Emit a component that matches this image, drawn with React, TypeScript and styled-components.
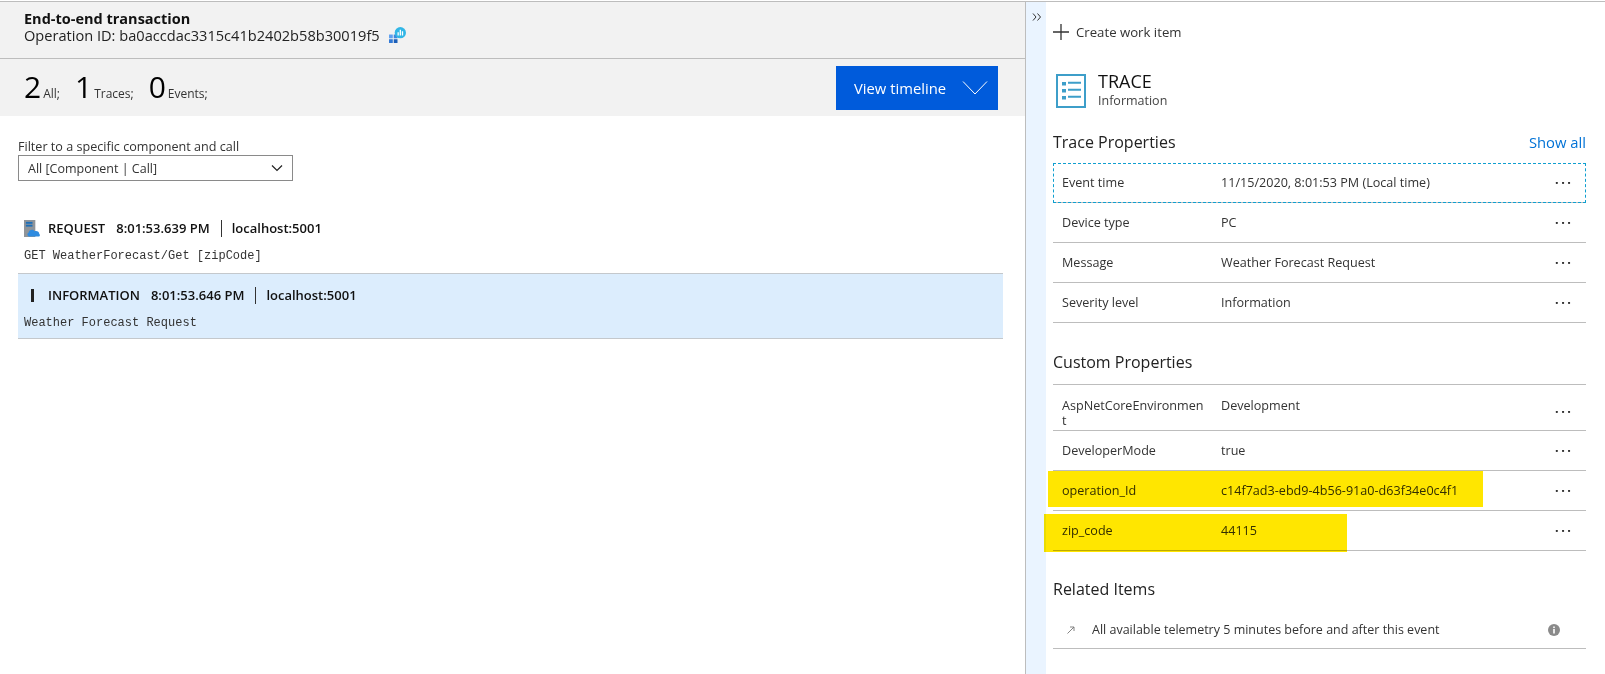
import React from "react";
import styled, { createGlobalStyle } from "styled-components";

const Global = createGlobalStyle`
  html, body { margin: 0; padding: 0; background: #fff; }
  body { font-family: "Open Sans", "Noto Sans", "Liberation Sans", sans-serif; color: #1b1b1b; }
  * { box-sizing: border-box; }
`;

const Page = styled.div`
  display: flex;
  width: 1605px;
  height: 674px;
  padding-top: 1px;
  overflow: hidden;
`;
const Frame = styled.div`
  display: flex;
  flex: 1;
  border-top: 1px solid #bdbdbd;
`;
const LeftPane = styled.section`
  width: 1025px;
  flex: none;
  display: flex;
  flex-direction: column;
`;
const TitleBar = styled.header`
  height: 57px;
  padding: 9px 0 0 24px;
  background: #f2f2f2;
  border-bottom: 1px solid #bdbdbd;
`;
const Title = styled.div`
  font-size: 14.5px;
  line-height: 15px;
  font-weight: 700;
  color: #111;
`;
const OperationLine = styled.div`
  display: flex;
  align-items: center;
  gap: 9px;
  font-size: 14.6px;
  line-height: 18px;
  color: #222;
`;
const StatsBar = styled.div`
  height: 57px;
  padding: 7px 27px 0 24px;
  background: #f2f2f2;
  display: flex;
  justify-content: space-between;
  align-items: flex-start;
`;
const Stats = styled.div`
  display: flex;
  align-items: baseline;
  gap: 15px;
  padding-top: 5px;
`;
const Stat = styled.div`
  display: flex;
  align-items: baseline;
  gap: 2px;
  font-size: 12px;
  color: #333;
`;
const StatNumber = styled.span`
  font-size: 30px;
  line-height: 32px;
  color: #000;
`;
const TimelineButton = styled.button`
  width: 162px;
  height: 44px;
  border: 0;
  padding: 0 10px 0 18px;
  background: #005bdb;
  color: #fff;
  display: flex;
  align-items: center;
  justify-content: space-between;
  font: 14.8px "Open Sans", sans-serif;
`;
const FilterArea = styled.div`
  padding: 22px 0 0 18px;
`;
const FilterLabel = styled.div`
  font-size: 12.6px;
  line-height: 17px;
  color: #333;
`;
const Select = styled.div`
  width: 275px;
  height: 26px;
  border: 1px solid #8a8a8a;
  padding: 0 9px;
  display: flex;
  align-items: center;
  justify-content: space-between;
  font-size: 12.5px;
  color: #333;
`;
const Entries = styled.div`
  margin: 35px 22px 0 18px;
`;
const Entry = styled.div<{ $selected?: boolean }>`
  height: ${(p) => (p.$selected ? "66px" : "57px")};
  padding: ${(p) => (p.$selected ? "11px" : "2px")} 0 0 6px;
  background: ${(p) => (p.$selected ? "#dcedfd" : "transparent")};
  border-top: ${(p) => (p.$selected ? "1px solid #c4c8cc" : "0")};
  border-bottom: ${(p) => (p.$selected ? "1px solid #c4c8cc" : "0")};
`;
const EntryHead = styled.div`
  display: flex;
  align-items: center;
  height: 20px;
  font-size: 13px;
  font-weight: 600;
  color: #111;
`;
const EntryIcon = styled.span`
  width: 24px;
  flex: none;
  display: flex;
`;
const EntryTime = styled.span`
  margin-left: 11px;
  padding-right: 11px;
  border-right: 1px solid #333;
  line-height: 17px;
`;
const EntryHost = styled.span`
  margin-left: 10px;
`;
const Mono = styled.div`
  margin-top: 10px;
  font-family: "Liberation Mono", "DejaVu Sans Mono", monospace;
  font-size: 12px;
  line-height: 16px;
  color: #333;
`;
const InfoGlyph = styled.span`
  width: 3px;
  height: 13px;
  margin-left: 7px;
  background: #222;
`;
const Strip = styled.aside`
  width: 21px;
  flex: none;
  display: flex;
  align-items: flex-start;
  border-left: 1px solid #bdbdbd;
  background: #eaf4ff;
  padding: 11px 0 0 6px;
`;
const RightPane = styled.section`
  flex: 1;
  padding: 0 19px 0 7px;
`;
const CreateItem = styled.div`
  display: flex;
  align-items: center;
  gap: 7px;
  height: 18px;
  margin-top: 21px;
  font-size: 13.2px;
  color: #333;
`;
const Kind = styled.div`
  display: flex;
  align-items: center;
  gap: 12px;
  margin: 30px 0 0 3px;
`;
const KindName = styled.div`
  font-size: 18px;
  line-height: 20px;
  color: #111;
`;
const KindSub = styled.div`
  font-size: 12.5px;
  line-height: 20px;
  color: #444;
`;
const SectionHead = styled.div<{ $top: number }>`
  display: flex;
  justify-content: space-between;
  align-items: center;
  height: 22px;
  margin-top: ${(p) => p.$top}px;
  font-size: 16px;
  color: #222;
`;
const ShowAll = styled.a`
  font-size: 14.8px;
  color: #0072d6;
`;
const Rows = styled.div<{ $ruled?: boolean; $gap: number }>`
  margin-top: ${(p) => p.$gap}px;
  border-top: ${(p) => (p.$ruled ? "1px solid #bdbdbd" : "0")};
`;
const Row = styled.div<{ $focus?: boolean; $tall?: boolean }>`
  position: relative;
  display: grid;
  grid-template-columns: 159px 1fr 44px;
  align-items: ${(p) => (p.$tall ? "start" : "center")};
  height: ${(p) => (p.$tall ? "46px" : "40px")};
  padding: ${(p) => (p.$tall ? "13px" : "0")} 0 0 9px;
  font-size: 12.6px;
  line-height: 15px;
  color: #333;
  border-bottom: 1px solid #bdbdbd;
  outline: ${(p) => (p.$focus ? "1px dashed #0f9fd0" : "0")};
  outline-offset: -1px;
`;
const Label = styled.div`
  word-break: break-all;
  padding-right: 16px;
`;
const Dots = styled.div<{ $tall?: boolean }>`
  font-size: 15px;
  font-weight: 600;
  letter-spacing: 2px;
  color: #333;
  text-align: center;
  line-height: 15px;
  margin-top: ${(p) => (p.$tall ? "6px" : "0")};
`;
const Marker = styled.span<{ $left: number; $w: number; $top: number; $h: number }>`
  position: absolute;
  left: ${(p) => p.$left}px;
  top: ${(p) => p.$top}px;
  width: ${(p) => p.$w}px;
  height: ${(p) => p.$h}px;
  background: #ffe600;
  mix-blend-mode: multiply;
`;
const Related = styled.div`
  display: flex;
  align-items: center;
  height: 38px;
  margin-top: 11px;
  padding-left: 14px;
  font-size: 12.5px;
  color: #333;
  border-bottom: 1px solid #bdbdbd;
`;
const RelatedText = styled.span`
  margin-left: 17px;
  flex: 1;
`;
const InfoBadge = styled.span`
  width: 12px;
  height: 12px;
  margin-right: 26px;
  display: flex;
`;

const InsightsIcon = () => (
  <svg width="17" height="16" viewBox="0 0 18 17">
    <rect x="0" y="8" width="4" height="4" fill="#5ea0ef" />
    <rect x="5" y="8" width="4" height="4" fill="#3f85dc" />
    <rect x="0" y="13" width="4" height="4" fill="#2f78d6" />
    <rect x="5" y="13" width="4" height="4" fill="#1c5fb8" />
    <circle cx="12" cy="6" r="6" fill="#31b6e6" />
    <path d="M9 5.5h1.4V9H9zM11.3 3h1.4v6h-1.4zM13.6 4.5H15V9h-1.4z" fill="#fff" />
  </svg>
);

const TraceIcon = () => (
  <svg width="30" height="34" viewBox="0 0 30 34">
    <rect x="1" y="1" width="28" height="32" fill="#fff" stroke="#3d9ec9" strokeWidth="2" />
    <rect x="6" y="8" width="4" height="3.5" fill="#3d9ec9" />
    <rect x="6" y="15" width="4" height="3.5" fill="#3d9ec9" />
    <rect x="6" y="22" width="4" height="3.5" fill="#3d9ec9" />
    <path d="M12 8.8h13M12 15.8h13M12 22.8h13" stroke="#3d9ec9" strokeWidth="2" />
  </svg>
);

const RequestIcon = () => (
  <svg width="17" height="17" viewBox="0 0 18 18">
    <rect x="0" y="0" width="12" height="18" fill="#8f9499" />
    <rect x="2" y="2" width="7" height="2" fill="#1e6fb8" />
    <rect x="2" y="5" width="7" height="2" fill="#1e6fb8" />
    <path d="M6 17.5c-2.4 0-3.3-3.3-1-4.3.2-2.7 4.5-4.2 6.2-1.2 2.4-1 5 .6 5 2.9.9.4 1.1 2.6-.6 2.6z" fill="#2e8be0" />
  </svg>
);

const Chevron = () => (
  <svg width="12" height="8" viewBox="0 0 12 8" fill="none" stroke="#222" strokeWidth="1.2">
    <path d="M1 1.5 6 6.5 11 1.5" />
  </svg>
);
const BigChevron = () => (
  <svg width="26" height="16" viewBox="0 0 26 16" fill="none" stroke="#fff" strokeWidth="1">
    <path d="M1 1.5 13 14 25 1.5" />
  </svg>
);
const DoubleChevron = () => (
  <svg width="10" height="8" viewBox="0 0 10 8" fill="none" stroke="#333" strokeWidth="1">
    <path d="M1 .5 4 4 1 7.5M5.5 .5 8.5 4 5.5 7.5" />
  </svg>
);
const Plus = () => (
  <svg width="16" height="16" viewBox="0 0 16 16" stroke="#333" strokeWidth="1.3">
    <path d="M8 0v16M0 8h16" />
  </svg>
);
const OutArrow = () => (
  <svg width="8" height="8" viewBox="0 0 8 8" fill="none" stroke="#777" strokeWidth="0.9">
    <path d="M.5 7.5 7 1M3 1h4v4" />
  </svg>
);
const Info = () => (
  <svg width="12" height="12" viewBox="0 0 12 12">
    <circle cx="6" cy="6" r="6" fill="#8a8a8a" />
    <rect x="5.2" y="5" width="1.6" height="4.5" fill="#fff" />
    <rect x="5.2" y="2.5" width="1.6" height="1.6" fill="#fff" />
  </svg>
);

type Prop = { k: string; v: string };
const traceProps: Prop[] = [
  { k: "Event time", v: "11/15/2020, 8:01:53 PM (Local time)" },
  { k: "Device type", v: "PC" },
  { k: "Message", v: "Weather Forecast Request" },
  { k: "Severity level", v: "Information" },
];

export default function App() {
  return (
    <>
      <Global />
      <Page>
        <Frame>
          <LeftPane>
            <TitleBar>
              <Title>End-to-end transaction</Title>
              <OperationLine>
                Operation ID: ba0accdac3315c41b2402b58b30019f5
                <InsightsIcon />
              </OperationLine>
            </TitleBar>
            <StatsBar>
              <Stats>
                <Stat><StatNumber>2</StatNumber>All;</Stat>
                <Stat><StatNumber>1</StatNumber>Traces;</Stat>
                <Stat><StatNumber>0</StatNumber>Events;</Stat>
              </Stats>
              <TimelineButton>
                View timeline
                <BigChevron />
              </TimelineButton>
            </StatsBar>
            <FilterArea>
              <FilterLabel>Filter to a specific component and call</FilterLabel>
              <Select>
                All [Component | Call]
                <Chevron />
              </Select>
            </FilterArea>
            <Entries>
              <Entry>
                <EntryHead>
                  <EntryIcon><RequestIcon /></EntryIcon>
                  REQUEST
                  <EntryTime>8:01:53.639 PM</EntryTime>
                  <EntryHost>localhost:5001</EntryHost>
                </EntryHead>
                <Mono>GET WeatherForecast/Get [zipCode]</Mono>
              </Entry>
              <Entry $selected>
                <EntryHead>
                  <EntryIcon><InfoGlyph /></EntryIcon>
                  INFORMATION
                  <EntryTime>8:01:53.646 PM</EntryTime>
                  <EntryHost>localhost:5001</EntryHost>
                </EntryHead>
                <Mono>Weather Forecast Request</Mono>
              </Entry>
            </Entries>
          </LeftPane>
          <Strip><DoubleChevron /></Strip>
          <RightPane>
            <CreateItem><Plus />Create work item</CreateItem>
            <Kind>
              <TraceIcon />
              <div>
                <KindName>TRACE</KindName>
                <KindSub>Information</KindSub>
              </div>
            </Kind>
            <SectionHead $top={20}>
              Trace Properties
              <ShowAll>Show all</ShowAll>
            </SectionHead>
            <Rows $gap={10}>
              {traceProps.map((p, i) => (
                <Row key={p.k} $focus={i === 0}>
                  <Label>{p.k}</Label>
                  <div>{p.v}</div>
                  <Dots>···</Dots>
                </Row>
              ))}
            </Rows>
            <SectionHead $top={28}>Custom Properties</SectionHead>
            <Rows $gap={11} $ruled>
              <Row $tall>
                <Label>AspNetCoreEnvironment</Label>
                <div>Development</div>
                <Dots $tall>···</Dots>
              </Row>
              <Row>
                <Label>DeveloperMode</Label>
                <div>true</div>
                <Dots>···</Dots>
              </Row>
              <Row>
                <Label>operation_Id</Label>
                <div>c14f7ad3-ebd9-4b56-91a0-d63f34e0c4f1</div>
                <Dots>···</Dots>
                <Marker $left={-5} $w={435} $top={0} $h={36} />
              </Row>
              <Row>
                <Label>zip_code</Label>
                <div>44115</div>
                <Dots>···</Dots>
                <Marker $left={-9} $w={303} $top={3} $h={38} />
              </Row>
            </Rows>
            <SectionHead $top={27}>Related Items</SectionHead>
            <Related>
              <OutArrow />
              <RelatedText>All available telemetry 5 minutes before and after this event</RelatedText>
              <InfoBadge><Info /></InfoBadge>
            </Related>
          </RightPane>
        </Frame>
      </Page>
    </>
  );
}
